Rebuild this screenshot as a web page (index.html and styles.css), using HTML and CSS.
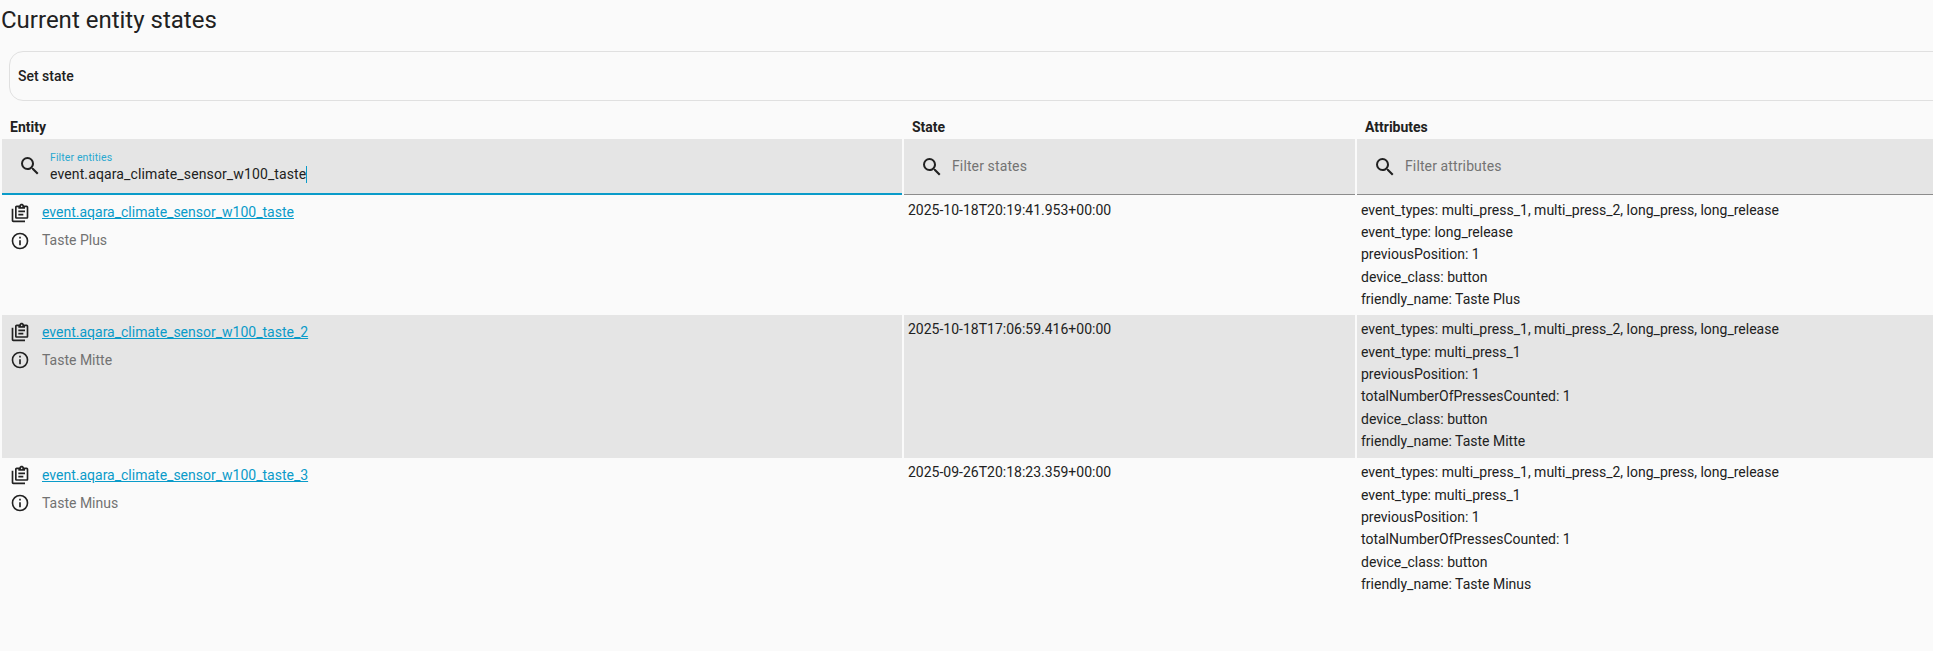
FILE: index.html
```html
<!DOCTYPE html>
<html lang="en">
<head>
<meta charset="utf-8">
<title>Current entity states</title>
<link rel="stylesheet" href="styles.css">
</head>
<body>
<svg class="defs" width="0" height="0" aria-hidden="true">
  <symbol id="i-search" viewBox="0 0 24 24"><path d="M9.5,3A6.5,6.5 0 0,1 16,9.5C16,11.11 15.41,12.59 14.44,13.73L14.71,14H15.5L20.5,19L19,20.5L14,15.5V14.71L13.73,14.44C12.59,15.41 11.11,16 9.5,16A6.5,6.5 0 0,1 3,9.5A6.5,6.5 0 0,1 9.5,3M9.5,5C7,5 5,7 5,9.5C5,12 7,14 9.5,14C12,14 14,12 14,9.5C14,7 12,5 9.5,5Z"/></symbol>
  <symbol id="i-info" viewBox="0 0 24 24"><path d="M11,9H13V7H11M12,20C7.59,20 4,16.41 4,12C4,7.59 7.59,4 12,4C16.41,4 20,7.59 20,12C20,16.41 16.41,20 12,20M12,2A10,10 0 0,0 2,12A10,10 0 0,0 12,22A10,10 0 0,0 22,12A10,10 0 0,0 12,2M11,17H13V11H11V17Z"/></symbol>
  <symbol id="i-clip" viewBox="0 0 24 24"><path fill-rule="evenodd" d="M4 7V21H18V23H4C2.9 23 2 22.1 2 21V7H4M20 3C21.1 3 22 3.9 22 5V17C22 18.1 21.1 19 20 19H8C6.9 19 6 18.1 6 17V5C6 3.9 6.9 3 8 3H11.18C11.6 1.84 12.7 1 14 1C15.3 1 16.4 1.84 16.82 3H20M14 3C13.45 3 13 3.45 13 4C13 4.55 13.45 5 14 5C14.55 5 15 4.55 15 4C15 3.45 14.55 3 14 3M10 7V5H8V17H20V5H18V7H10M18 11H10V9H18V11M16 15H10V13H16V15Z"/></symbol>
</svg>

<h1 class="title">Current entity states</h1>

<section class="card"><span class="card-title">Set state</span></section>

<table class="states">
  <thead>
    <tr class="heads">
      <th class="col-entity">Entity</th>
      <th class="col-state">State</th>
      <th class="col-attrs">Attributes</th>
    </tr>
    <tr class="filters">
      <th>
        <div class="field field-active">
          <svg class="icon-search"><use href="#i-search"/></svg>
          <div class="field-body">
            <span class="field-label">Filter entities</span>
            <span class="field-value">event.aqara_climate_sensor_w100_taste<span class="caret"></span></span>
          </div>
        </div>
      </th>
      <th>
        <div class="field">
          <svg class="icon-search"><use href="#i-search"/></svg>
          <span class="field-placeholder">Filter states</span>
        </div>
      </th>
      <th>
        <div class="field">
          <svg class="icon-search"><use href="#i-search"/></svg>
          <span class="field-placeholder">Filter attributes</span>
        </div>
      </th>
    </tr>
  </thead>
  <tbody>
    <tr>
      <td class="entity">
        <div class="entity-line"><svg class="icon"><use href="#i-clip"/></svg><a href="#">event.aqara_climate_sensor_w100_taste</a></div>
        <div class="entity-line name"><svg class="icon"><use href="#i-info"/></svg><span>Taste Plus</span></div>
      </td>
      <td>2025-10-18T20:19:41.953+00:00</td>
      <td>
        <div>event_types: multi_press_1, multi_press_2, long_press, long_release</div>
        <div>event_type: long_release</div>
        <div>previousPosition: 1</div>
        <div>device_class: button</div>
        <div>friendly_name: Taste Plus</div>
      </td>
    </tr>
    <tr class="odd">
      <td class="entity">
        <div class="entity-line"><svg class="icon"><use href="#i-clip"/></svg><a href="#">event.aqara_climate_sensor_w100_taste_2</a></div>
        <div class="entity-line name"><svg class="icon"><use href="#i-info"/></svg><span>Taste Mitte</span></div>
      </td>
      <td>2025-10-18T17:06:59.416+00:00</td>
      <td>
        <div>event_types: multi_press_1, multi_press_2, long_press, long_release</div>
        <div>event_type: multi_press_1</div>
        <div>previousPosition: 1</div>
        <div>totalNumberOfPressesCounted: 1</div>
        <div>device_class: button</div>
        <div>friendly_name: Taste Mitte</div>
      </td>
    </tr>
    <tr>
      <td class="entity">
        <div class="entity-line"><svg class="icon"><use href="#i-clip"/></svg><a href="#">event.aqara_climate_sensor_w100_taste_3</a></div>
        <div class="entity-line name"><svg class="icon"><use href="#i-info"/></svg><span>Taste Minus</span></div>
      </td>
      <td>2025-09-26T20:18:23.359+00:00</td>
      <td>
        <div>event_types: multi_press_1, multi_press_2, long_press, long_release</div>
        <div>event_type: multi_press_1</div>
        <div>previousPosition: 1</div>
        <div>totalNumberOfPressesCounted: 1</div>
        <div>device_class: button</div>
        <div>friendly_name: Taste Minus</div>
      </td>
    </tr>
  </tbody>
</table>
</body>
</html>
```

FILE: styles.css
```css
html, body {
  margin: 0;
  height: 100%;
  overflow: hidden;
  background: #fafafa;
}

body {
  font-family: Roboto, "Liberation Sans", sans-serif;
  font-size: 14px;
  color: #212121;
  width: 2100px;
}

.defs {
  display: block;
  height: 0;
}

.title {
  margin: 0;
  padding-left: 1px;
  font-size: 24px;
  font-weight: 400;
  line-height: 40px;
}

.card {
  box-sizing: border-box;
  margin: 11px 0 0 9px;
  width: 2060px;
  height: 50px;
  padding: 0 0 1px 8px;
  display: flex;
  align-items: center;
  font-weight: 500;
  border: 1px solid #e0e0e0;
  border-radius: 14px;
}

.states {
  table-layout: fixed;
  width: 2060px;
  border-collapse: separate;
  border-spacing: 2px 0;
}

.col-entity { width: 900px; }
.col-state { width: 451px; }
.col-attrs { width: auto; }

.heads th {
  height: 38px;
  padding: 14px 8px 0;
  box-sizing: border-box;
  text-align: left;
  font-weight: 700;
  line-height: 24px;
}

.filters th {
  padding: 0;
  font-weight: 400;
  text-align: left;
}

.field {
  box-sizing: border-box;
  height: 56px;
  padding-left: 16px;
  display: flex;
  align-items: center;
  gap: 8px;
  background: #e5e5e5;
  border-bottom: 1px solid #8c8c8c;
}

.field-active {
  border-bottom: 2px solid #0a9bc9;
}

.icon-search {
  width: 24px;
  height: 24px;
  flex: none;
  fill: #212121;
}

.field-body {
  display: flex;
  flex-direction: column;
  padding-top: 2px;
}

.field-label {
  font-size: 10.5px;
  line-height: 13px;
  letter-spacing: 0.12px;
  color: #2aa8d0;
  padding-top: 1px;
}

.field-value {
  font-size: 14px;
  line-height: 20px;
  letter-spacing: 0.12px;
  color: #212121;
}

.caret {
  display: inline-block;
  width: 1px;
  height: 17px;
  background: #0a9bc9;
  vertical-align: -4px;
}

.field-placeholder {
  color: #737373;
  line-height: 20px;
  letter-spacing: 0.12px;
  margin-bottom: 2px;
}

.states td {
  padding: 3.6px 4px 4px;
  vertical-align: top;
  line-height: 22.4px;
}

.states .odd td {
  background: #e5e5e5;
  padding-bottom: 5px;
}

.states td.entity,
.states .odd td.entity {
  padding: 3.6px 8px 0;
}

.entity-line {
  display: flex;
  align-items: center;
  gap: 12px;
  height: 28px;
}

.icon {
  width: 20px;
  height: 20px;
  flex: none;
  fill: #212121;
}

.entity-line a {
  color: #0a9bc9;
  text-decoration: underline;
}

.name {
  color: #727272;
}
```
